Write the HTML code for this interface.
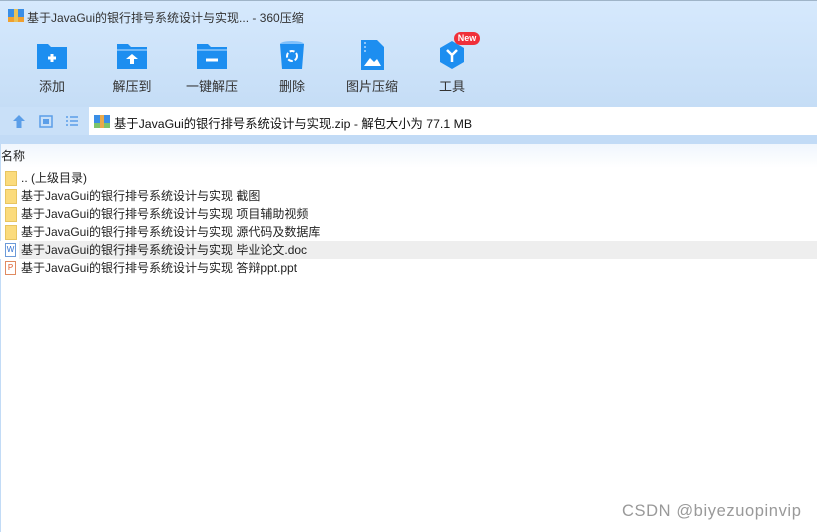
<!DOCTYPE html>
<html><head><meta charset="utf-8"><style>
*{margin:0;padding:0;box-sizing:border-box}
body{width:817px;height:532px;overflow:hidden;background:#fff;font-family:"Liberation Sans","Noto Sans CJK SC",sans-serif;font-size:12px;color:#222;position:relative}
.top{position:absolute;left:0;top:0;width:817px;height:107px;background:linear-gradient(#d6e9fd,#c5ddf6);border-top:1px solid #9fb4c8}
.title{position:absolute;left:27px;top:9px;font-size:12px;color:#333}
.btn{position:absolute;top:40px;width:70px;text-align:center;font-size:13px;color:#333}
.btn .ic{width:32px;height:30px;margin:0 auto 6px;position:relative}
.addr{position:absolute;left:0;top:107px;width:817px;height:28px;background:#c9e0f8}
.box{position:absolute;left:89px;top:107px;width:728px;height:28px;background:#fff}
.strip{position:absolute;left:0;top:135px;width:817px;height:9px;background:#c2dbf6}
.grad{position:absolute;left:0;top:144px;width:817px;height:24px;background:linear-gradient(#f0f6fd,#fff)}
.row{position:absolute;left:0;height:18px;line-height:18px;font-size:12px;width:817px}
.row span{position:absolute;left:21px}
.fold{position:absolute;left:5px;top:2px;width:12px;height:15px;background:#fbdb7c;border:1px solid #e8c560}
.doc{position:absolute;left:5px;top:2px;width:11px;height:14px;border:1px solid #8aa;background:#fff;font-size:8px;line-height:11px;text-align:center}
</style></head><body>
<div class="top"></div>
<svg style="position:absolute;left:8px;top:8px" width="16" height="15"><rect x="0" y="1" width="16" height="13" fill="#3a8ee6"/><rect x="0" y="9" width="16" height="5" fill="#f0a030"/><rect x="6" y="1" width="4" height="13" fill="#e9c25a"/></svg>
<div class="title">基于JavaGui的银行排号系统设计与实现... - 360压缩</div>
<div class="btn" style="left:17px"><div class="ic"><svg width="32" height="30"><path d="M1 4h11l3 3h16v22H1z" fill="#1d8ef0"/><path d="M12 18h8M16 14v8" stroke="#fff" stroke-width="3"/></svg></div>添加</div>
<div class="btn" style="left:97px"><div class="ic"><svg width="32" height="30"><path d="M1 4h11l3 3h16v22H1z" fill="#1d8ef0"/><path d="M1 10h30" stroke="#8cc6fb" stroke-width="1.5"/><path d="M10 19l6-5 6 5h-4v5h-4v-5z" fill="#fff"/></svg></div>解压到</div>
<div class="btn" style="left:177px"><div class="ic"><svg width="32" height="30"><path d="M1 4h11l3 3h16v22H1z" fill="#1d8ef0"/><path d="M1 10h30" stroke="#8cc6fb" stroke-width="1.5"/><path d="M10 20h12" stroke="#fff" stroke-width="3"/></svg></div>一键解压</div>
<div class="btn" style="left:257px"><div class="ic"><svg width="32" height="30"><ellipse cx="16" cy="4" rx="12" ry="3" fill="#7fc0fb"/><path d="M4 4h24l-2 25H6z" fill="#1d8ef0"/><circle cx="16" cy="16" r="5" fill="none" stroke="#fff" stroke-width="2" stroke-dasharray="5 2"/></svg></div>删除</div>
<div class="btn" style="left:337px"><div class="ic"><svg width="32" height="30"><path d="M5 0h16l7 7v23H5z" fill="#1d8ef0"/><path d="M9 2v10" stroke="#8cc6fb" stroke-width="2" stroke-dasharray="2 2"/><path d="M8 26l6-8 4 4 3-3 4 7z" fill="#fff"/></svg></div>图片压缩</div>
<div class="btn" style="left:417px"><div class="ic"><svg width="34" height="30"><path d="M16 1l12 7v14l-12 7-12-7V8z" fill="#1d8ef0"/><path d="M11 10l5 5 5-5M16 15v7" stroke="#fff" stroke-width="2.5" fill="none"/></svg></div>工具</div>
<div style="position:absolute;left:454px;top:32px;width:26px;height:13px;border-radius:7px;background:#f0303a;color:#fff;font-size:9px;line-height:13px;text-align:center;font-weight:bold">New</div>
<div class="addr"></div>
<svg style="position:absolute;left:12px;top:114px" width="70" height="16"><path d="M7 1l6 6h-3.5v7h-5V7H1z" fill="#5b9ee8"/><rect x="28" y="2" width="12" height="11" fill="none" stroke="#5b9ee8" stroke-width="1.5"/><rect x="31" y="5" width="6" height="5" fill="#5b9ee8"/><path d="M54 3h2M54 7h2M54 11h2M58 3h8M58 7h8M58 11h8" stroke="#5b9ee8" stroke-width="1.6"/></svg>
<div class="box"></div>
<svg style="position:absolute;left:94px;top:114px" width="16" height="15"><rect x="0" y="1" width="16" height="13" fill="#3a8ee6"/><rect x="0" y="9" width="16" height="5" fill="#7cc36a"/><rect x="6" y="1" width="4" height="13" fill="#e9a94a"/></svg>
<div style="position:absolute;left:114px;top:114px;font-size:12.3px;color:#111">基于JavaGui的银行排号系统设计与实现.zip - 解包大小为 77.1 MB</div>
<div class="strip"></div><div class="grad"></div>
<div style="position:absolute;left:0;top:144px;width:1px;height:388px;background:#c2dbf6"></div>
<div style="position:absolute;left:1px;top:147px;font-size:12px">名称</div>
<div class="row" style="top:169px"><div class="fold"></div><span>.. (上级目录)</span></div>
<div class="row" style="top:187px"><div class="fold"></div><span>基于JavaGui的银行排号系统设计与实现 截图</span></div>
<div class="row" style="top:205px"><div class="fold"></div><span>基于JavaGui的银行排号系统设计与实现 项目辅助视频</span></div>
<div class="row" style="top:223px"><div class="fold"></div><span>基于JavaGui的银行排号系统设计与实现 源代码及数据库</span></div>
<div class="row" style="top:241px;background:linear-gradient(90deg,#fff 19px,#eeeeee 19px)"><div class="doc" style="color:#2f6fd0;border-color:#6c9ad8">W</div><span>基于JavaGui的银行排号系统设计与实现 毕业论文.doc</span></div>
<div class="row" style="top:259px"><div class="doc" style="color:#e05a2a;border-color:#e08a60">P</div><span>基于JavaGui的银行排号系统设计与实现 答辩ppt.ppt</span></div>
<div style="position:absolute;left:622px;top:502px;font-size:16.5px;letter-spacing:0.6px;color:#999">CSDN @biyezuopinvip</div>
</body></html>
